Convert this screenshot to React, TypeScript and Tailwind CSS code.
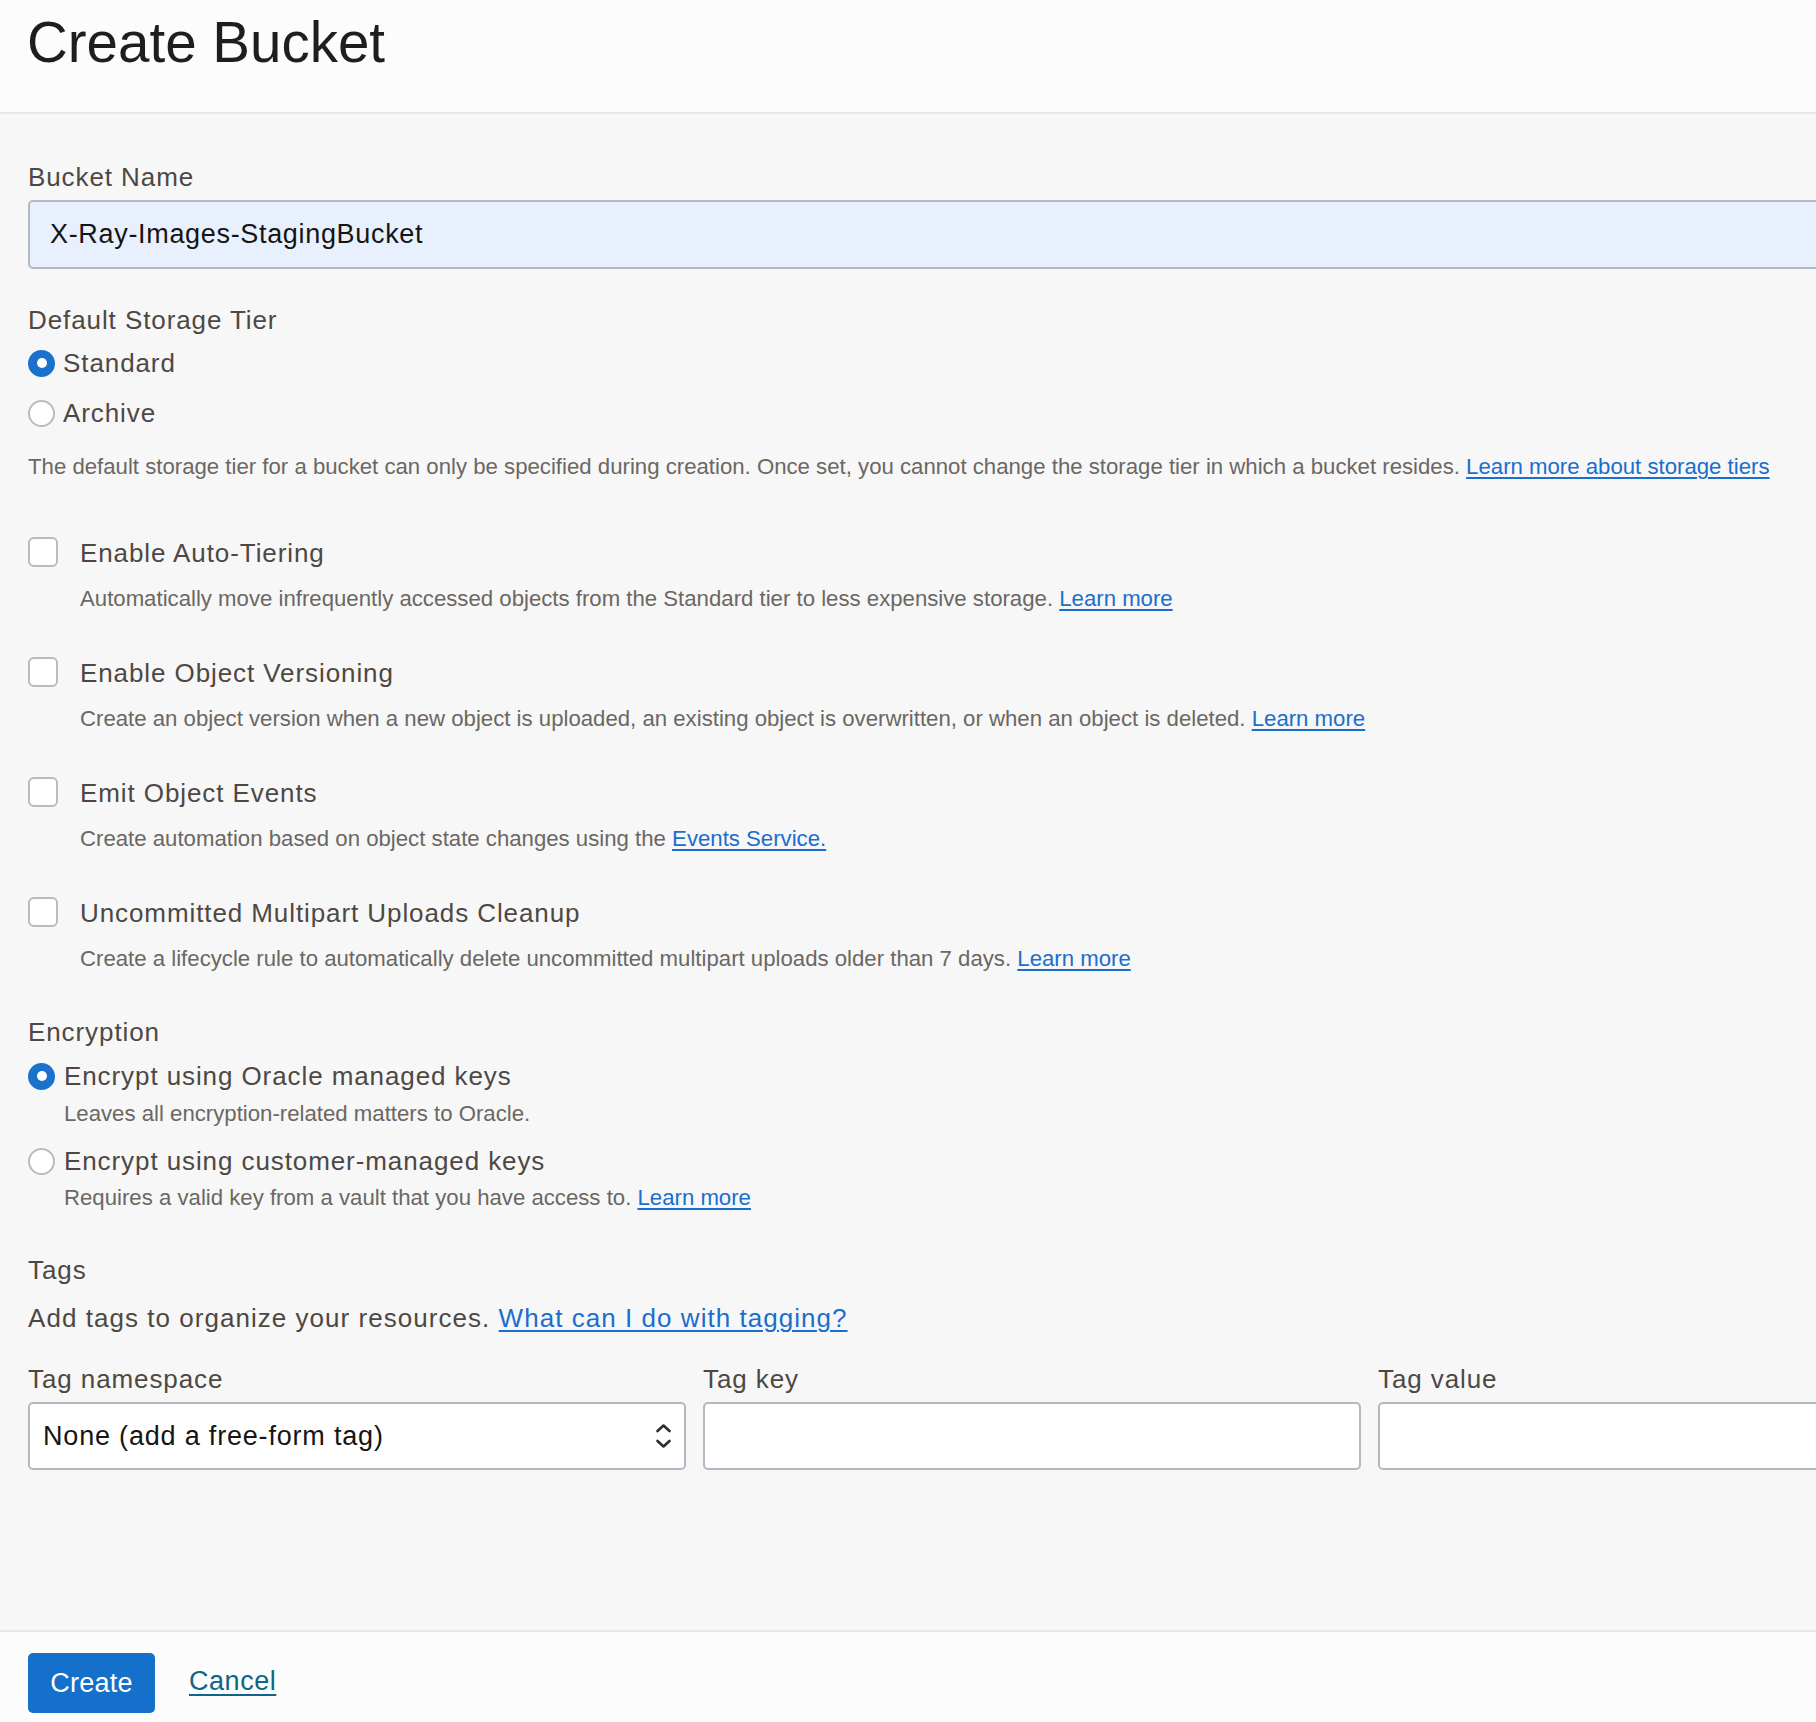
import React from "react";

const Link = ({ children, className = "" }: { children: React.ReactNode; className?: string }) => (
  <a href="#" className={`text-[#1a6ecd] underline underline-offset-[3px] decoration-[1.5px] ${className}`}>
    {children}
  </a>
);

const Radio = ({ checked }: { checked: boolean }) =>
  checked ? (
    <span className="w-[27px] h-[27px] shrink-0 rounded-full bg-[#1a72cd] flex items-center justify-center">
      <span className="w-[10px] h-[10px] rounded-full bg-white" />
    </span>
  ) : (
    <span className="w-[27px] h-[27px] shrink-0 rounded-full bg-white border-2 border-[#b6bcc4]" />
  );

const CheckGroup = ({ label, children, first }: { label: string; children: React.ReactNode; first?: boolean }) => (
  <div className={first ? "mt-[55px]" : "mt-[43px]"}>
    <div className="flex items-start">
      <span className="w-[30px] h-[30px] shrink-0 rounded-[6px] bg-white border-2 border-[#b6bcc4]" />
      <span className="ml-[22px] text-[26px] leading-[32px] tracking-[0.035em] text-[#4d4844]">{label}</span>
    </div>
    <div className="mt-[15px] pl-[52px] text-[22.2px] leading-[30px] text-[#6b6763]">{children}</div>
  </div>
);

export default function App() {
  return (
    <div className="w-[1816px] h-[1722px] overflow-hidden bg-[#f7f7f7] flex flex-col font-['Liberation_Sans',Arial,sans-serif]">
      <div className="h-[114px] shrink-0 bg-[#fcfcfc] border-b-2 border-[#e6e6e6] pl-[27px] pt-[15px]">
        <h1 className="text-[56.5px] leading-[56px] text-[#1f1e1d] font-normal">Create Bucket</h1>
      </div>

      <div className="flex-1 overflow-hidden px-[28px]">
        <div className="w-[2008px] flex flex-col">
          <div className="mt-[47px] text-[26px] leading-[32px] tracking-[0.035em] text-[#4d4844]">Bucket Name</div>
          <div className="mt-[7px] h-[69px] rounded-[5px] border-2 border-[#b3b9c1] bg-[#e8f0fe] pl-[20px] flex items-center text-[27px] tracking-[0.025em] text-[#161513]">
            X-Ray-Images-StagingBucket
          </div>

          <div className="mt-[35px] text-[26px] leading-[32px] tracking-[0.035em] text-[#4d4844]">Default Storage Tier</div>
          <div className="mt-[9px] h-[36px] flex items-center">
            <Radio checked />
            <span className="ml-[8px] text-[26px] leading-[36px] tracking-[0.035em] text-[#4d4844]">Standard</span>
          </div>
          <div className="mt-[14px] h-[36px] flex items-center">
            <Radio checked={false} />
            <span className="ml-[8px] text-[26px] leading-[36px] tracking-[0.035em] text-[#4d4844]">Archive</span>
          </div>
          <div className="mt-[21px] text-[22.2px] leading-[30px] text-[#6b6763] whitespace-nowrap">
            The default storage tier for a bucket can only be specified during creation. Once set, you cannot change the storage tier in which a bucket resides.{" "}
            <Link>Learn more about storage tiers</Link>
          </div>

          <CheckGroup label="Enable Auto-Tiering" first>
            Automatically move infrequently accessed objects from the Standard tier to less expensive storage.{" "}
            <Link>Learn more</Link>
          </CheckGroup>
          <CheckGroup label="Enable Object Versioning">
            Create an object version when a new object is uploaded, an existing object is overwritten, or when an object is deleted.{" "}
            <Link>Learn more</Link>
          </CheckGroup>
          <CheckGroup label="Emit Object Events">
            Create automation based on object state changes using the <Link>Events Service.</Link>
          </CheckGroup>
          <CheckGroup label="Uncommitted Multipart Uploads Cleanup">
            Create a lifecycle rule to automatically delete uncommitted multipart uploads older than 7 days.{" "}
            <Link>Learn more</Link>
          </CheckGroup>

          <div className="mt-[42px] text-[26px] leading-[32px] tracking-[0.035em] text-[#4d4844]">Encryption</div>
          <div className="mt-[12px] h-[32px] flex items-center">
            <Radio checked />
            <span className="ml-[9px] text-[26px] leading-[32px] tracking-[0.035em] text-[#4d4844]">Encrypt using Oracle managed keys</span>
          </div>
          <div className="mt-[8px] pl-[36px] text-[22.2px] leading-[28px] text-[#6b6763]">Leaves all encryption-related matters to Oracle.</div>
          <div className="mt-[17px] h-[32px] flex items-center">
            <Radio checked={false} />
            <span className="ml-[9px] text-[26px] leading-[32px] tracking-[0.035em] text-[#4d4844]">Encrypt using customer-managed keys</span>
          </div>
          <div className="mt-[7px] pl-[36px] text-[22.2px] leading-[28px] text-[#6b6763]">
            Requires a valid key from a vault that you have access to. <Link>Learn more</Link>
          </div>

          <div className="mt-[42px] text-[26px] leading-[32px] tracking-[0.035em] text-[#4d4844]">Tags</div>
          <div className="mt-[16px] text-[26px] leading-[32px] tracking-[0.04em] text-[#4d4844]">
            Add tags to organize your resources. <Link>What can I do with tagging?</Link>
          </div>

          <div className="mt-[29px] grid grid-cols-[658px_658px_658px] gap-x-[17px]">
            <div className="flex flex-col">
              <div className="text-[26px] leading-[32px] tracking-[0.035em] text-[#4d4844]">Tag namespace</div>
              <div className="mt-[7px] h-[68px] rounded-[5px] border-2 border-[#b3b9c1] bg-white pl-[13px] pr-[12px] flex items-center justify-between">
                <span className="text-[27px] tracking-[0.03em] text-[#161513]">None (add a free-form tag)</span>
                <svg width="17" height="26" viewBox="0 0 17 26" fill="none" stroke="#2f2c2a" strokeWidth="2.6" strokeLinecap="round" strokeLinejoin="round">
                  <path d="M2.5 8 L8.5 2.5 L14.5 8" />
                  <path d="M2.5 18 L8.5 23.5 L14.5 18" />
                </svg>
              </div>
            </div>
            <div className="flex flex-col">
              <div className="text-[26px] leading-[32px] tracking-[0.035em] text-[#4d4844]">Tag key</div>
              <div className="mt-[7px] h-[68px] rounded-[5px] border-2 border-[#b3b9c1] bg-white" />
            </div>
            <div className="flex flex-col">
              <div className="text-[26px] leading-[32px] tracking-[0.035em] text-[#4d4844]">Tag value</div>
              <div className="mt-[7px] h-[68px] rounded-[5px] border-2 border-[#b3b9c1] bg-white" />
            </div>
          </div>
        </div>
      </div>

      <div className="h-[92px] shrink-0 bg-[#fcfcfc] border-t-2 border-[#e6e6e6] pl-[28px] pt-[21px] flex items-start">
        <button className="w-[127px] h-[60px] rounded-[5px] bg-[#1570cb] text-white text-[27px] tracking-[0.01em] flex items-center justify-center">
          Create
        </button>
        <a href="#" className="ml-[34px] mt-[8px] text-[27px] leading-[40px] tracking-[0.02em] text-[#0f6585] underline underline-offset-[4px] decoration-2">
          Cancel
        </a>
      </div>
    </div>
  );
}
